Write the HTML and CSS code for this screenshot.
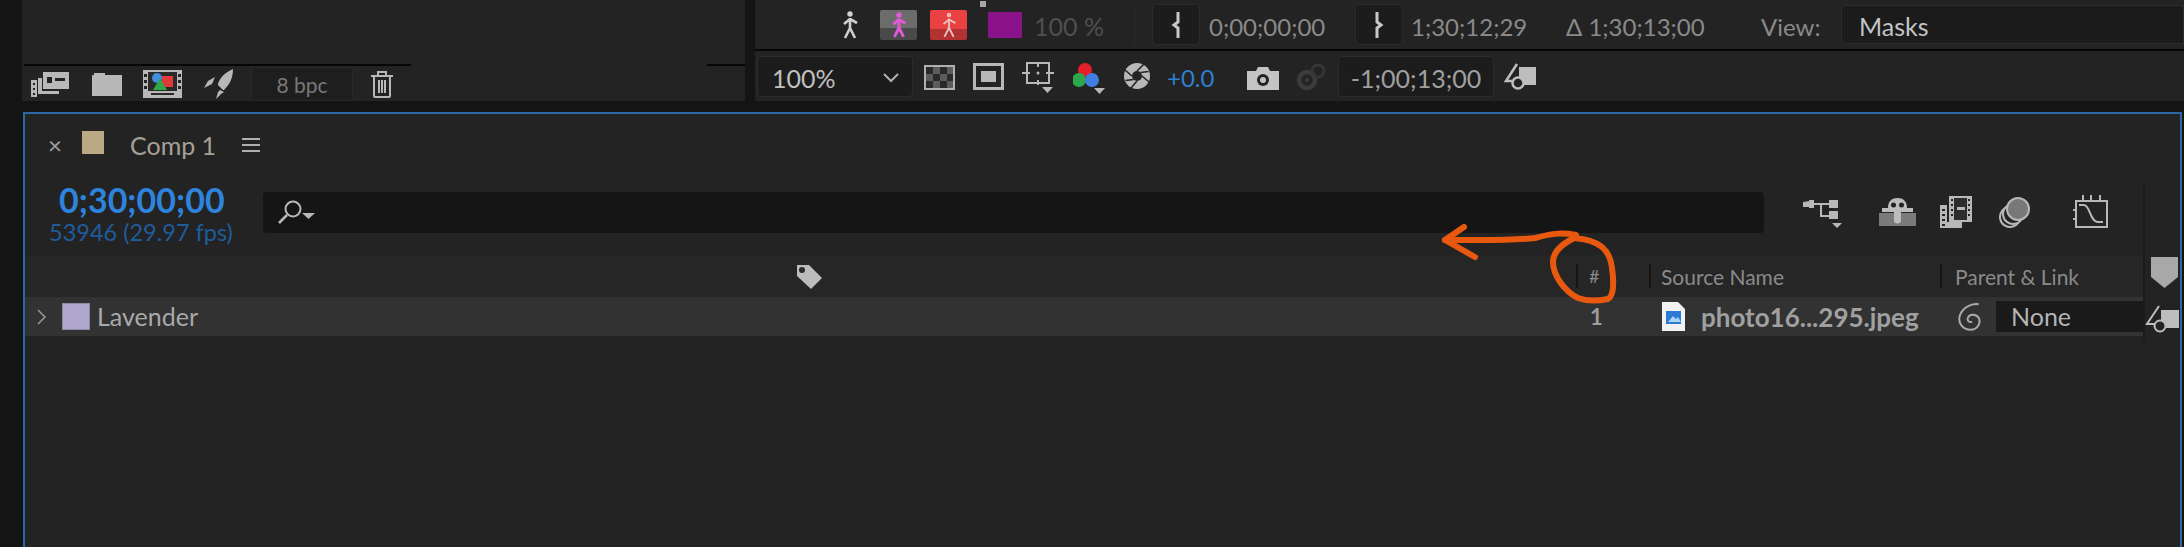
FILE: index.html
```html
<!DOCTYPE html>
<html lang="en">
<head>
<meta charset="utf-8">
<title>Comp 1</title>
<link rel="stylesheet" href="styles.css">
</head>
<body>
<div class="page">
  <div class="top">
    <section class="project">
      <div class="project-rule"><span class="rule rule-a"></span><span class="rule rule-b"></span></div>
      <div class="project-tools">
        <svg class="ic i-interpret" viewBox="0 0 38 25"><path fill="#b8b8b8" d="M0 8h6v17H0zM12 0h26v17H12zM7 6h4v13h17v3H7z"/><path fill="#232323" d="M2 11h2v2H2zM2 16h2v2H2zM2 21h2v2H2zM16 5h5v6h-5zM24 6h10v3H24z"/></svg>
        <svg class="ic i-folder" viewBox="0 0 30 24"><path fill="#b8b8b8" d="M0 4a1 1 0 0 1 1-1h1V1h11v2h17v21H0z"/></svg>
        <svg class="ic i-footage" viewBox="0 0 39 28"><path fill="#b8b8b8" d="M0 0h39v28H0z"/><path fill="#2a2a2a" d="M5 2h29v19H5zM8 23h23v2H8z"/><path fill="#232323" d="M1 4h3v3H1zM1 10h3v3H1zM1 16h3v3H1zM35 4h3v3h-3zM35 10h3v3h-3zM35 16h3v3h-3z"/><path fill="#e23a3a" d="M19 6h11v11H19z"/><circle cx="14" cy="8" r="5" fill="#3f8fe0"/><path fill="#2fa84a" d="M17 8l7 12H10z"/></svg>
        <svg class="ic i-rocket" viewBox="0 0 29 30"><path fill="#b8b8b8" d="M29 0c0 10-4 16-9 21l-1 0-5-5 0-1C16 8 22 3 29 0zM11 8L8 15l-8 4 4-7zM20 23l-3 2-5 5 2-7 2-2z"/></svg>
        <div class="bpc">8 bpc</div>
        <svg class="ic i-trash" viewBox="0 0 24 28"><path fill="none" stroke="#b8b8b8" stroke-width="2" d="M1 6h22M8 5V2h8v3M4 6v20a1 1 0 0 0 1 1h14a1 1 0 0 0 1-1V6M9 10v13M12 10v13M15 10v13"/></svg>
      </div>
    </section>

    <section class="viewer">
      <div class="viewer-row viewer-row-a">
        <svg class="ic i-walk" viewBox="0 0 24 28"><g fill="none" stroke="#cfcfcf" stroke-width="2.600"><circle cx="12" cy="3" r="1.400" fill="#cfcfcf"/><path d="M12 7v10M12 8l-6 5M12 8l7 4M12 17l-5 10M12 17l5 10"/></g></svg>
        <div class="walk walk-pink"><svg class="ic i-walk-s" viewBox="0 0 24 28"><g fill="none" stroke="#e05ad8" stroke-width="3.200"><circle cx="12" cy="3" r="1.400"/><path d="M12 7v10M12 8l-6 5M12 8l7 4M12 17l-5 10M12 17l5 10"/></g></svg></div>
        <div class="walk walk-red"><svg class="ic i-walk-s" viewBox="0 0 24 28"><g fill="none" stroke="#e8c4c0" stroke-width="2"><circle cx="12" cy="3" r="1.400"/><path d="M12 7v10M12 8l-6 5M12 8l7 4M12 17l-5 10M12 17l5 10"/></g></svg></div>
        <div class="purple"><span class="purple-dot"></span></div>
        <div class="t t-dim t-pct">100 %</div>
        <span class="vsep"></span>
        <div class="brk brk-a"><svg class="ic i-brk" viewBox="0 0 12 28"><path fill="none" stroke="#c8c8c8" stroke-width="3" d="M8 1v10l-4 3 4 3v10"/></svg></div>
        <div class="t t-code t-in">0;00;00;00</div>
        <div class="brk brk-b"><svg class="ic i-brk" viewBox="0 0 12 28"><path fill="none" stroke="#c8c8c8" stroke-width="3" d="M4 1v10l4 3-4 3v10"/></svg></div>
        <div class="t t-code t-out">1;30;12;29</div>
        <div class="t t-code t-dur">Δ 1;30;13;00</div>
        <div class="t t-code t-view">View:</div>
        <div class="masks">Masks</div>
      </div>
      <div class="viewer-row viewer-row-b">
        <div class="zoom-select"><span>100%</span><svg class="ic i-chev" viewBox="0 0 16 10"><path fill="none" stroke="#b0b0b0" stroke-width="2" d="M1 1l7 7 7-7"/></svg></div>
        <svg class="ic i-grid" viewBox="0 0 31 25"><rect x="1" y="1" width="29" height="23" fill="#5c5c5c" stroke="#b0b0b0" stroke-width="2"/><path fill="#2a2a2a" d="M2 2h7v7H2zM16 2h7v7h-7zM9 9h7v7H9zM23 9h6v7h-6zM2 16h7v7H2zM16 16h7v7h-7z"/></svg>
        <svg class="ic i-safe" viewBox="0 0 31 27"><rect x="1.500" y="1.500" width="28" height="24" fill="none" stroke="#b8b8b8" stroke-width="3"/><rect x="8" y="8" width="15" height="11" fill="#b8b8b8"/></svg>
        <svg class="ic i-target" viewBox="0 0 33 31"><path fill="none" stroke="#b8b8b8" stroke-width="2" d="M5 1h22v20H5zM0 11h8M24 11h8M16 0v5M16 18v5"/><circle cx="16" cy="11" r="1.500" fill="#b8b8b8"/><path fill="#b8b8b8" d="M20 25h11l-5.500 6z"/></svg>
        <svg class="ic i-rgb" viewBox="0 0 32 31"><circle cx="12" cy="7" r="7" fill="#e3202a"/><circle cx="6" cy="17" r="7" fill="#2ba84a"/><circle cx="19" cy="17" r="7" fill="#3f7fe0"/><path fill="#b8b8b8" d="M21 25h11l-5.500 6z"/></svg>
        <svg class="ic i-aperture" viewBox="0 0 26 26"><circle cx="13" cy="13" r="13" fill="#b8b8b8"/><circle cx="13" cy="13" r="5" fill="#232323"/><path fill="none" stroke="#232323" stroke-width="1.600" d="M13 8L20 1M18 13l7 6M13 18l-6 7M8 13L1 7M16.500 9.500l8-1M9.500 16.500l-8 1"/></svg>
        <div class="t t-plus">+0.0</div>
        <svg class="ic i-camera" viewBox="0 0 32 23"><path fill="#c4c4c4" d="M0 4h9l2-4h10l2 4h9v19H0z"/><circle cx="16" cy="13" r="6" fill="#232323"/><circle cx="16" cy="13" r="3" fill="#c4c4c4"/></svg>
        <svg class="ic i-snap" viewBox="0 0 31 27"><circle cx="11" cy="17" r="8" fill="none" stroke="#3c3c3c" stroke-width="4.500"/><circle cx="22" cy="8" r="6" fill="none" stroke="#363636" stroke-width="3"/><circle cx="11" cy="17" r="2" fill="#3c3c3c"/></svg>
        <div class="offset">-1;00;13;00</div>
        <svg class="ic i-shapes" viewBox="0 0 32 28"><path fill="#bdbdbd" d="M15 5h17v18H15z"/><path fill="#232323" stroke="#bdbdbd" stroke-width="2.500" d="M13 2L2 19h12"/><circle cx="14" cy="21" r="5.500" fill="#232323" stroke="#bdbdbd" stroke-width="2.500"/></svg>
      </div>
    </section>
  </div>

  <section class="comp">
    <div class="tab-row">
      <span class="tab-close">×</span>
      <span class="tab-swatch"></span>
      <span class="tab-name">Comp 1</span>
      <span class="tab-menu"><i></i><i></i><i></i></span>
    </div>
    <div class="comp-body">
      <div class="comp-main">
        <div class="search-row">
          <div class="timecode">
            <div class="tc-main">0;30;00;00</div>
            <div class="tc-sub">53946 (29.97 fps)</div>
          </div>
          <div class="search">
            <svg class="ic i-search" viewBox="0 0 37 25"><circle cx="15" cy="9" r="7.500" fill="none" stroke="#b8b8b8" stroke-width="2"/><path fill="none" stroke="#b8b8b8" stroke-width="2.500" d="M9 15L1 23"/><path fill="#b8b8b8" d="M24 13h13l-6.500 6z"/></svg>
          </div>
          <div class="switches">
            <svg class="ic i-tree" viewBox="0 0 39 28"><path fill="none" stroke="#b8b8b8" stroke-width="2" d="M10 4h18M18 4v12h10"/><path fill="#b8b8b8" d="M0 2l7-1v6H0zM6 0h5v8H6zM26 0h9v8h-9zM26 11h9v8h-9zM29 23h10l-5 5z"/></svg>
            <svg class="ic i-shy" viewBox="0 0 37 28"><path fill="#7a7a7a" d="M0 15h37v13H0z"/><path fill="#bcbcbc" d="M9 10C9 3 13 0 18.500 0S28 3 28 10h6v4H3v-4zM15 13h7v9a3.500 3.500 0 0 1-7 0z"/><circle cx="14.500" cy="7" r="2.500" fill="#232323"/><circle cx="22.500" cy="7" r="2.500" fill="#232323"/></svg>
            <svg class="ic i-frames" viewBox="0 0 32 32"><path fill="#b8b8b8" d="M0 9h7v17h15v6H0z"/><path fill="#232323" d="M2 13h3v2H2zM2 18h3v2H2zM2 23h3v2H2zM2 28h3v2H2z"/><path fill="#b8b8b8" d="M9 0h23v26H9z"/><path fill="#2c2c2c" d="M14 2h13v22H14z"/><path fill="#232323" d="M11 3h2v2h-2zM11 8h2v2h-2zM11 13h2v2h-2zM11 18h2v2h-2zM28 3h2v2h-2zM28 8h2v2h-2zM28 13h2v2h-2zM28 18h2v2h-2z"/><path fill="#b8b8b8" d="M17 11h8v3h-8z"/></svg>
            <svg class="ic i-blur" viewBox="0 0 32 31"><ellipse cx="12" cy="20" rx="10" ry="10" fill="none" stroke="#b8b8b8" stroke-width="2" transform="rotate(35 12 20)"/><ellipse cx="15" cy="17" rx="10" ry="10" fill="#232323" stroke="#b8b8b8" stroke-width="2" transform="rotate(35 15 17)"/><circle cx="20" cy="12" r="11" fill="#787878" stroke="#b8b8b8" stroke-width="2"/></svg>
            <svg class="ic i-graph" viewBox="0 0 36 33"><path fill="none" stroke="#b8b8b8" stroke-width="2" d="M3 6h31v26H3zM10 0v6M18 0v6M27 0v6M0 15h3M0 24h3"/><path fill="none" stroke="#b8b8b8" stroke-width="2" d="M6 10h5c6 0 6 17 14 17h5"/></svg>
          </div>
        </div>
        <div class="col-head">
          <svg class="ic i-tag" viewBox="0 0 28 27"><path fill="#bcbcbc" d="M2 2h12l13 13-11 11L2 13z"/><circle cx="7" cy="7" r="3" fill="#2a2a2a"/></svg>
          <span class="col-sep col-sep-num"></span>
          <span class="col-hash">#</span>
          <span class="col-sep col-sep-src"></span>
          <span class="col-src">Source Name</span>
          <span class="col-sep col-sep-par"></span>
          <span class="col-par">Parent &amp; Link</span>
        </div>
        <div class="layer">
          <svg class="ic i-twirl" viewBox="0 0 10 16"><path fill="none" stroke="#999" stroke-width="1.500" d="M1 1l7 7-7 7"/></svg>
          <span class="layer-swatch"></span>
          <span class="layer-label">Lavender</span>
          <span class="layer-num">1</span>
          <svg class="ic i-file" viewBox="0 0 23 29"><path fill="#f2f2f2" d="M0 0h16l7 7v22H0z"/><path fill="#2c7ad6" d="M4 9h15v13H4z"/><path fill="#a8d4f8" d="M6 20l5-6 3 3 2-2 3 5z"/></svg>
          <span class="layer-file">photo16...295.jpeg</span>
          <svg class="ic i-spiral" viewBox="3 1 19 21"><path fill="none" stroke="#aaa" stroke-width="1.500" d="M14 15c-2 1-4-1-3-3 1-3 6-3 8 0 2 4-1 9-6 9-6 0-10-5-8-11 2-5 8-9 14-8"/></svg>
          <div class="layer-parent">None</div>
        </div>
      </div>
      <aside class="rail">
        <svg class="ic i-marker" viewBox="0 0 27 31"><path fill="#a8a8a8" d="M0 0h27v20L13.500 31 0 20z"/></svg>
        <svg class="ic i-rail-shapes" viewBox="0 0 34 28"><path fill="#bdbdbd" d="M16 5h18v18H16z"/><path fill="#232323" stroke="#bdbdbd" stroke-width="2" d="M14 1L2 19h12"/><circle cx="15" cy="21" r="5.500" fill="#232323" stroke="#bdbdbd" stroke-width="2"/></svg>
      </aside>
    </div>
  </section>

  <svg class="scribble" viewBox="0 0 2184 547">
    <g fill="none" stroke="#e8590f" stroke-width="6" stroke-linecap="round" stroke-linejoin="round">
      <path d="M1464 227L1445 240L1475 257"/>
      <path d="M1445 240C1475 240 1510 241 1535 238C1550 234 1560 232 1576 235"/>
      <path d="M1574 238C1600 240 1610 250 1612 268C1614 282 1614 296 1608 299C1598 301 1586 301 1578 298C1564 291 1553 275 1553 262C1553 252 1562 244 1574 238"/>
    </g>
  </svg>
</div>
</body>
</html>
```

FILE: styles.css
```css
* { box-sizing: border-box; }
html, body { margin: 0; padding: 0; }
body { background: #141414; font-family: "Lato", "Liberation Sans", sans-serif; color: #a8a8a8; }
.page { position: relative; width: 2184px; height: 547px; overflow: hidden; }
.ic { display: block; flex: none; }

.top { display: flex; height: 112px; padding-left: 22px; }
.project { width: 723px; height: 101px; background: #232323; display: flex; flex-direction: column; }
.project-rule { height: 66px; display: flex; justify-content: space-between; align-items: flex-end; padding: 0 0 0 2px; }
.rule { height: 2px; background: #060606; }
.rule-a { width: 387px; }
.rule-b { width: 38px; }
.project-tools { display: flex; align-items: center; padding-left: 9px; height: 35px; }
.i-interpret { width: 38px; height: 25px; margin-top: 1px; }
.i-folder { width: 30px; height: 24px; margin-left: 23px; }
.i-footage { width: 39px; height: 28px; margin-left: 21px; }
.i-rocket { width: 29px; height: 30px; margin-left: 22px; }
.bpc { width: 102px; height: 34px; margin-left: 18px; border: 1px solid #2a2a2a; background: #1e1e1e; border-radius: 3px; text-align: center; font-size: 21px; line-height: 34px; color: #787878; }
.i-trash { width: 24px; height: 28px; margin-left: 17px; }

.viewer { margin-left: 10px; flex: 1; height: 101px; background: #232323; display: flex; flex-direction: column; }
.viewer-row { display: flex; align-items: center; }
.viewer-row-a { height: 51px; border-bottom: 2px solid #060606; }
.viewer-row-b { height: 50px; }
.t { font-size: 24px; padding-top: 3px; white-space: nowrap; }
.i-walk { width: 24px; height: 28px; margin-left: 83px; }
.walk { width: 37px; height: 30px; display: flex; align-items: center; justify-content: center; border-radius: 2px; }
.walk-pink { margin-left: 18px; background: linear-gradient(#6c6c6c 60%, #4a4a4a 60%); }
.walk-red { margin-left: 13px; background: linear-gradient(#ea4242 65%, #b23232 65%); }
.i-walk-s { width: 22px; height: 26px; }
.purple { position: relative; width: 34px; height: 26px; margin-left: 21px; background: #8a1389; }
.purple-dot { position: absolute; left: -8px; top: -11px; width: 6px; height: 6px; background: #a8a8a8; }
.t-dim { color: #4f4f4f; }
.t-pct { width: 70px; margin-left: 12px; font-size: 25px; }
.vsep { width: 1px; height: 40px; margin-left: 30px; background: #2b2b2b; }
.brk { width: 48px; height: 41px; display: flex; align-items: center; justify-content: center; background: #1c1c1c; border: 1px solid #2c2c2c; border-radius: 4px; }
.brk-a { margin-left: 17px; }
.brk-b { margin-left: 28px; }
.i-brk { width: 12px; height: 28px; }
.t-code { color: #8a8a8a; }
.t-in { width: 118px; margin-left: 9px; }
.t-out { width: 118px; margin-left: 8px; }
.t-dur { width: 141px; margin-left: 37px; }
.t-view { width: 60px; margin-left: 54px; }
.masks { flex: 1; height: 39px; margin-left: 20px; padding: 2px 0 0 17px; background: #1b1b1b; border: 1px solid #2c2c2c; border-radius: 4px 0 0 4px; font-size: 25px; line-height: 36px; color: #c4c4c4; }

.zoom-select { width: 156px; height: 41px; margin-left: 2px; display: flex; align-items: center; justify-content: space-between; padding: 3px 13px 0 14px; background: #1c1c1c; border: 1px solid #2c2c2c; border-radius: 4px; font-size: 25px; color: #c0c0c0; }
.i-chev { width: 16px; height: 10px; }
.i-grid { width: 31px; height: 25px; margin-left: 11px; margin-top: 3px; }
.i-safe { width: 31px; height: 27px; margin-left: 18px; }
.i-target { width: 33px; height: 31px; margin-left: 18px; margin-top: 3px; }
.i-rgb { width: 32px; height: 31px; margin-left: 18px; margin-top: 4px; }
.i-aperture { width: 26px; height: 26px; margin-left: 19px; }
.t-plus { width: 46px; margin-left: 17px; color: #2f7fd0; }
.i-camera { width: 32px; height: 23px; margin-left: 34px; margin-top: 4px; }
.i-snap { width: 31px; height: 27px; margin-left: 17px; }
.offset { width: 156px; height: 41px; margin-left: 11px; padding-top: 3px; background: #1c1c1c; border: 1px solid #2c2c2c; border-radius: 4px; text-align: center; font-size: 25px; line-height: 36px; color: #a0a0a0; }
.i-shapes { width: 32px; height: 28px; margin-left: 10px; }

.comp { width: 2159px; height: 435px; margin-left: 23px; background: #232323; border: 2px solid #2b67a2; border-bottom: 0; }
.tab-row { display: flex; align-items: center; height: 64px; }
.tab-close { width: 14px; margin: -2px 0 0 23px; font-size: 24px; line-height: 1; color: #a0a0a0; text-align: center; }
.tab-swatch { width: 22px; height: 23px; margin-left: 20px; margin-top: -8px; background: #bba884; }
.tab-name { width: 86px; margin: -3px 0 0 26px; font-size: 25px; color: #a6a196; white-space: nowrap; }
.tab-menu { width: 18px; margin: -3px 0 0 26px; display: flex; flex-direction: column; gap: 4px; }
.tab-menu i { display: block; height: 2px; background: #b0b0b0; }
.comp-body { display: flex; align-items: flex-start; }
.comp-main { width: 2118px; }
.rail { width: 37px; height: 158px; margin-top: 5px; background: #232323; border-left: 2px solid #1c1c1c; padding: 74px 0 0 6px; display: flex; flex-direction: column; }
.i-marker { width: 27px; height: 31px; }
.i-rail-shapes { width: 34px; height: 28px; margin: 17px 0 0 -6px; }
.search-row { display: flex; height: 77px; }
.timecode { width: 238px; padding-left: 24px; }
.tc-main { font-size: 34px; font-weight: 700; line-height: 38px; margin: 3px 0 0 10px; color: #2e84dc; white-space: nowrap; }
.tc-sub { font-size: 23.500px; line-height: 26px; color: #1f5c9c; white-space: nowrap; }
.search { width: 1501px; height: 41px; margin-top: 14px; display: flex; align-items: center; padding-left: 15px; background: #151515; border-radius: 4px; }
.i-search { width: 37px; height: 25px; }
.switches { display: flex; align-items: flex-start; padding-top: 17px; }
.i-tree { width: 39px; height: 28px; margin: 5px 0 0 39px; }
.i-shy { width: 37px; height: 28px; margin: 3px 0 0 37px; }
.i-frames { width: 32px; height: 32px; margin: 1px 0 0 24px; }
.i-blur { width: 32px; height: 31px; margin: 2px 0 0 26px; }
.i-graph { width: 36px; height: 33px; margin-left: 43px; }
.col-head { display: flex; align-items: center; height: 42px; background: #262626; color: #8a8a8a; font-size: 21px; }
.i-tag { width: 28px; height: 27px; margin-left: 770px; }
.col-sep { width: 2px; height: 24px; background: #161616; }
.col-sep-num { margin-left: 753px; }
.col-hash { width: 16px; margin-left: 11px; font-size: 18px; }
.col-sep-src { margin-left: 44px; }
.col-src { width: 122px; margin-left: 10px; white-space: nowrap; }
.col-sep-par { margin-left: 157px; }
.col-par { width: 128px; margin-left: 13px; white-space: nowrap; }
.layer { display: flex; align-items: center; height: 39px; background: #323232; }
.i-twirl { width: 10px; height: 16px; margin-left: 12px; }
.layer-swatch { width: 28px; height: 27px; margin-left: 15px; background: #b0a8cc; border: 1px solid #8f8aa4; }
.layer-label { width: 103px; margin: -1px 0 0 7px; font-size: 25px; color: #a9a9a9; }
.layer-num { width: 12px; margin-left: 1390px; font-size: 22px; font-weight: 700; color: #9c9c9c; }
.i-file { width: 23px; height: 29px; margin-left: 60px; }
.layer-file { width: 218px; margin-left: 16px; font-size: 26px; font-weight: 700; color: #a0a0a0; white-space: nowrap; }
.i-spiral { width: 28px; height: 28px; margin-left: 37px; }
.layer-parent { flex: 1; height: 31px; margin-left: 12px; padding-left: 15px; background: #1a1a1a; font-size: 25px; line-height: 31px; color: #b4b4b4; }

.scribble { position: absolute; left: 0; top: 0; width: 2184px; height: 547px; pointer-events: none; }
```
